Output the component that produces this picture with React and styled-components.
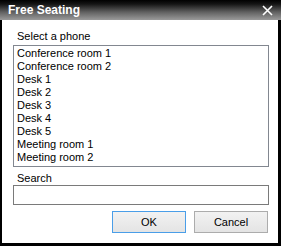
import React, { useState } from "react";
import styled, { createGlobalStyle } from "styled-components";

const Global = createGlobalStyle`
  html, body {
    margin: 0;
    padding: 0;
    background: #000;
  }
  #root {
    width: 281px;
    height: 246px;
  }
`;

const Window = styled.div`
  width: 281px;
  height: 246px;
  background: #000;
  display: flex;
  flex-direction: column;
  box-sizing: border-box;
  padding: 0 3px 3px 2px;
  font-family: "Liberation Sans", Arial, sans-serif;
`;

const TitleBar = styled.div`
  height: 20px;
  margin: 0 -3px 0 -2px;
  padding: 0 8px 0 8px;
  display: flex;
  align-items: center;
  justify-content: space-between;
  background: linear-gradient(#000 0%, #141414 20%, #606060 60%, #9a9a9a 100%);
`;

const Title = styled.span`
  color: #fff;
  font-weight: bold;
  font-size: 12px;
  line-height: 20px;
`;

const Close = styled.svg`
  width: 11px;
  height: 11px;
`;

const Client = styled.div`
  flex: 1;
  background: #fff;
  padding: 9px 9px 10px 11px;
  display: flex;
  flex-direction: column;
`;

const Label = styled.div`
  font-size: 11px;
  line-height: 14px;
  color: #000;
  padding-left: 4px;
  margin-top: ${p => p.$top || 0}px;
`;

const ListBox = styled.ul`
  list-style: none;
  margin: 2px 0 0 0;
  padding: 1px 3px;
  height: 122px;
  box-sizing: border-box;
  border: 1px solid #828790;
  overflow: hidden;
`;

const Item = styled.li`
  font-size: 11px;
  line-height: 13px;
  height: 13px;
  color: ${p => (p.$sel ? "#fff" : "#000")};
  background: ${p => (p.$sel ? "#3399ff" : "transparent")};
  cursor: default;
`;

const SearchInput = styled.input`
  height: 20px;
  box-sizing: border-box;
  border: 1px solid #7a7a7a;
  outline: none;
  padding: 0 3px;
  font-family: inherit;
  font-size: 11px;
`;

const ButtonRow = styled.div`
  display: flex;
  justify-content: flex-end;
  gap: 8px;
  margin-top: 6px;
  padding-right: 1px;
`;

const Button = styled.button`
  width: 74px;
  height: 22px;
  box-sizing: border-box;
  border: 1px solid ${p => (p.$primary ? "#4a9ee8" : "#acacac")};
  border-radius: 0;
  background: linear-gradient(#f2f2f2, #e4e4e4);
  font-family: inherit;
  font-size: 11px;
  color: #000;
  padding: 0;
`;

const phones = [
  "Conference room 1",
  "Conference room 2",
  "Desk 1",
  "Desk 2",
  "Desk 3",
  "Desk 4",
  "Desk 5",
  "Meeting room 1",
  "Meeting room 2",
];

export default function App() {
  const [search, setSearch] = useState("");
  const [selected, setSelected] = useState(null);

  return (
    <>
      <Global />
      <Window>
        <TitleBar>
          <Title>Free Seating</Title>
          <Close viewBox="0 0 11 11">
            <path d="M1 1 L10 10 M10 1 L1 10" stroke="#fff" strokeWidth="1.6" />
          </Close>
        </TitleBar>
        <Client>
          <Label>Select a phone</Label>
          <ListBox>
            {phones
              .filter(p => p.toLowerCase().includes(search.toLowerCase()))
              .map(p => (
                <Item key={p} $sel={selected === p} onClick={() => setSelected(p)}>
                  {p}
                </Item>
              ))}
          </ListBox>
          <Label $top={4}>Search</Label>
          <SearchInput value={search} onChange={e => setSearch(e.target.value)} />
          <ButtonRow>
            <Button $primary>OK</Button>
            <Button>Cancel</Button>
          </ButtonRow>
        </Client>
      </Window>
    </>
  );
}
